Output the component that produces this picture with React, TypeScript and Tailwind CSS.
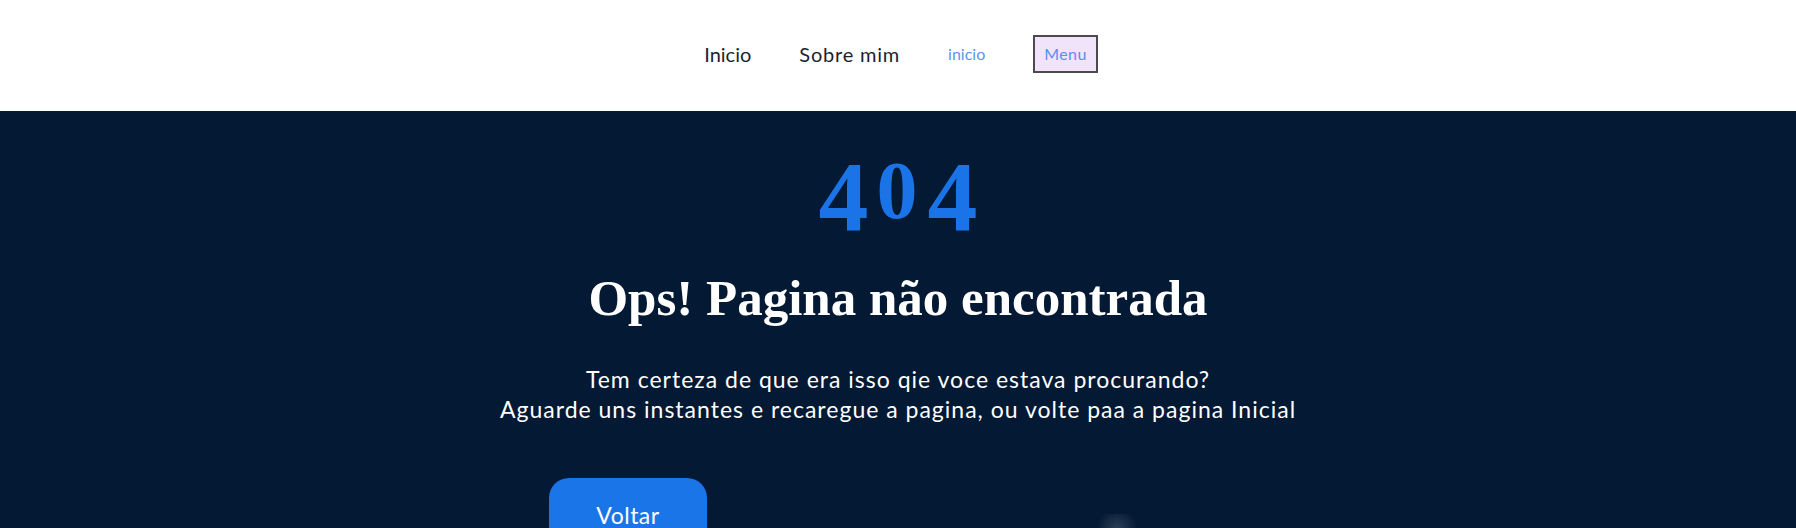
export default function App() {
  return (
    <div className="w-full min-h-screen bg-[#041933] font-['Lato','Liberation_Sans',sans-serif]">
      <header className="h-[111px] bg-white flex items-center justify-center">
        <nav className="flex items-center gap-[48px] pl-[6px] -mt-[3px]">
          <a className="text-[20px] text-[#1c1f2e]">Inicio</a>
          <a className="text-[20px] tracking-[0.8px] text-[#1c1f2e]">Sobre mim</a>
          <a className="text-[16px] text-[#5f93f2]">inicio</a>
          <button className="h-[38px] px-[9px] border-2 border-[#4a4a4f] bg-[#f1e3fa] text-[16px] tracking-[0.4px] text-[#5b8ef0]">
            Menu
          </button>
        </nav>
      </header>

      <main className="flex flex-col items-center pt-[36px] text-white">
        <h1 className="font-['Liberation_Serif',serif] font-bold text-[#1a74e8] text-[100px] leading-none">
          <span>4</span>
          <span className="text-[82px] align-[12px] ml-[8px] mr-[10px]">0</span>
          <span>4</span>
        </h1>
        <h2 className="mt-[24px] font-['Liberation_Serif',serif] font-bold text-[51px] leading-[55px]">
          Ops! Pagina não encontrada
        </h2>
        <p className="mt-[38px] text-[23px] leading-[30px] tracking-[1px] text-center">
          Tem certeza de que era isso qie voce estava procurando?
          <br />
          Aguarde uns instantes e recaregue a pagina, ou volte paa a pagina Inicial
        </p>

        <div className="mt-[54px] flex items-start justify-center gap-[140px]">
          <button className="w-[158px] pt-[20px] pb-[20px] rounded-[20px] bg-[#1a75e8] text-[23px] tracking-[0.5px] text-white">
            Voltar
          </button>
          <div className="w-[400px] h-[120px]">
            <div className="mt-[36px] ml-[245px] w-[50px] h-[30px] rounded-full bg-[radial-gradient(circle,rgba(150,165,185,0.28),rgba(4,25,51,0)_70%)]" />
          </div>
        </div>
      </main>
    </div>
  )
}
